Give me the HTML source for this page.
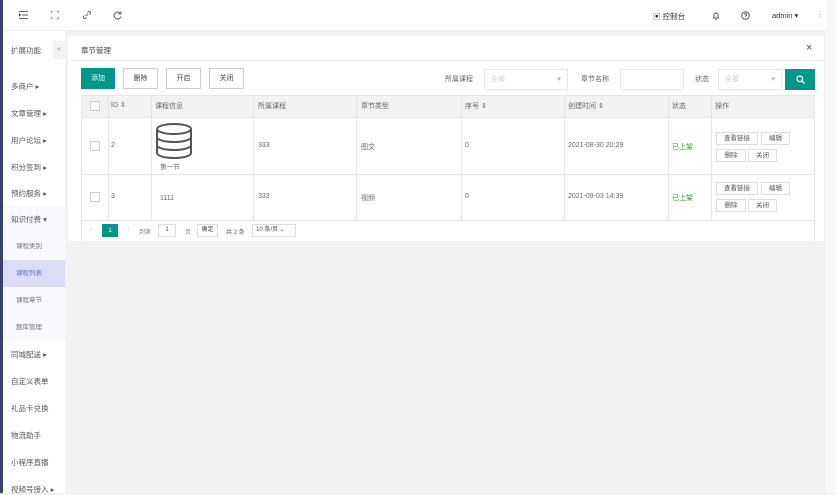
<!DOCTYPE html>
<html><head><meta charset="utf-8"><style>
*{box-sizing:border-box;margin:0;padding:0}
body{width:836px;height:493px;overflow:hidden;background:#f2f2f2;font-family:"Liberation Sans","Noto Sans CJK SC",sans-serif;font-size:8px;color:#444;position:relative}
.a{position:absolute}
.strip{left:0;top:0;width:3px;height:493px;background:#3b3e72}
.hdr{left:3px;top:0;width:823px;height:31px;background:#fff;border-bottom:1px solid #eee}
.sb{left:3px;top:31px;width:62px;height:462px;background:#fff}
.mi{position:absolute;left:8px;font-size:7.5px;color:#555}
.sub{position:absolute;left:0;width:62px;height:27px;background:#f8f8fd;font-size:6.5px;color:#777;padding-left:13px;line-height:27px}
.card{left:68px;top:36px;width:756px;height:205px;background:#fff}
.btn{position:absolute;top:68px;height:21px;border:1px solid #ccc;background:#fff;font-size:7px;text-align:center;line-height:19px;color:#444}
.th,.td{position:absolute;font-size:7px;color:#666}
.vl{position:absolute;width:1px;background:#e6e6e6}
.hl{position:absolute;height:1px;background:#e6e6e6;left:81px;width:734px}
.cb{position:absolute;left:90px;width:10px;height:10px;border:1px solid #ccc;background:#fff}
.ob{position:absolute;height:13px;border:1px solid #ddd;font-size:6.5px;line-height:11px;text-align:center;background:#fff;color:#555}
.sel{position:absolute;top:69px;height:21px;border:1px solid #e6e6e6;font-size:7px;color:#ccc;padding-left:6px;line-height:19px}
.scr{left:826px;top:0;width:10px;height:493px;background:#f7f7f7}
</style></head><body>
<div class="a strip"></div>
<div class="a hdr">
<svg class="a" style="left:16px;top:11px" width="9" height="8" stroke="#666" stroke-width="1"><path d="M0 .5h9M3 4h6M0 7.5h9M0 2.5l1.5 1.5L0 5.5"/></svg>
<svg class="a" style="left:48px;top:11px" width="8" height="8" stroke="#666" stroke-width="1" fill="none"><path d="M0 2.5V0h2.5M5.5 0H8v2.5M8 5.5V8H5.5M2.5 8H0V5.5"/></svg>
<svg class="a" style="left:80px;top:11px" width="8" height="8" stroke="#666" stroke-width="1" fill="none"><path d="M3 5l2-2M1.5 4.5l-1 1a1.5 1.5 0 002 2l1-1M4.5 1.5l1-1a1.5 1.5 0 012 2l-1 1"/></svg>
<svg class="a" style="left:110px;top:11px" width="9" height="9" stroke="#666" stroke-width="1.1" fill="none"><path d="M7.5 2.5A3.5 3.5 0 1 0 8 5.5M7.8 0.5v2.3H5.5"/></svg>
<span class="a" style="left:650px;top:11px;font-size:7.5px;color:#333">▣ 控制台</span>
<svg class="a" style="left:709px;top:11px" width="8" height="9" stroke="#555" stroke-width="1" fill="none"><path d="M1 7h6M2 7V4a2 2 0 014 0v3M3.3 8.5h1.4"/></svg>
<svg class="a" style="left:738px;top:11px" width="9" height="9" stroke="#555" stroke-width="1" fill="none"><circle cx="4.5" cy="4.5" r="3.8"/><path d="M3.3 3.5a1.2 1.2 0 112 1c-.6.3-.8.6-.8 1.2M4.5 6.8v.3"/></svg>
<span class="a" style="left:769px;top:11px;font-size:7.5px;color:#333">admin ▾</span>
<span class="a" style="left:813px;top:10px;font-size:8px;color:#999">⋮</span>
</div>
<div class="a sb">
<div class="mi" style="left:8px;top:14px">扩展功能</div>
<div class="a" style="left:50px;top:10px;width:12px;height:18px;background:#f2f2f2;color:#999;font-size:7px;text-align:center;line-height:18px">«</div>
<div class="mi" style="top:50px">多商户 ▸</div>
<div class="mi" style="top:77px">文章管理 ▸</div>
<div class="mi" style="top:104px">用户论坛 ▸</div>
<div class="mi" style="top:131px">积分签到 ▸</div>
<div class="mi" style="top:157px">预约服务 ▸</div>
<div class="sub" style="top:175px;background:#f8f8fd;font-size:7.5px;color:#555;padding-left:8px">知识付费 ▾</div>
<div class="sub" style="top:202px">课程类别</div>
<div class="sub" style="top:229px;background:#dcdcf5;color:#6a6ad0">课程列表</div>
<div class="sub" style="top:256px">课程章节</div>
<div class="sub" style="top:283px">题库管理</div>
<div class="mi" style="top:318px">同城配送 ▸</div>
<div class="mi" style="top:345px">自定义表单</div>
<div class="mi" style="top:372px">礼品卡兑换</div>
<div class="mi" style="top:399px">物流助手</div>
<div class="mi" style="top:426px">小程序直播</div>
<div class="mi" style="top:453px">视频号接入 ▸</div>
</div>
<div class="a card"></div>
<div class="a" style="left:81px;top:45px;font-size:7.5px;color:#444">章节管理</div>
<div class="a" style="left:806px;top:42px;font-size:11px;color:#555">×</div>
<div class="a" style="left:68px;top:60px;width:756px;height:1px;background:#eee"></div>
<div class="btn" style="left:81px;width:34px;background:#009688;border-color:#009688;color:#fff">添加</div>
<div class="btn" style="left:123px;width:35px">删除</div>
<div class="btn" style="left:166px;width:35px">开启</div>
<div class="btn" style="left:209px;width:35px">关闭</div>
<div class="a" style="left:445px;top:74px;font-size:7px;color:#666">所属课程</div>
<div class="sel" style="left:484px;width:84px">全部<span style="position:absolute;right:6px;color:#aaa">▾</span></div>
<div class="a" style="left:581px;top:74px;font-size:7px;color:#666">章节名称</div>
<div class="sel" style="left:620px;width:64px"></div>
<div class="a" style="left:695px;top:74px;font-size:7px;color:#666">状态</div>
<div class="sel" style="left:718px;width:64px">全部<span style="position:absolute;right:6px;color:#aaa">▾</span></div>
<div class="a" style="left:785px;top:69px;width:30px;height:21px;background:#009688"></div>
<svg class="a" style="left:796px;top:75px" width="9" height="9" stroke="#fff" stroke-width="1.3" fill="none"><circle cx="3.8" cy="3.8" r="2.8"/><path d="M6 6l2.5 2.5"/></svg>
<div class="a" style="left:81px;top:95px;width:734px;height:146px;border:1px solid #e6e6e6;border-bottom:none"></div>
<div class="a" style="left:82px;top:96px;width:732px;height:21px;background:#f2f2f2"></div>
<div class="hl" style="top:117px"></div><div class="hl" style="top:174px"></div><div class="hl" style="top:220px"></div>
<div class="vl" style="left:108px;top:96px;height:124px"></div>
<div class="vl" style="left:151px;top:96px;height:124px"></div>
<div class="vl" style="left:253px;top:96px;height:124px"></div>
<div class="vl" style="left:356px;top:96px;height:124px"></div>
<div class="vl" style="left:461px;top:96px;height:124px"></div>
<div class="vl" style="left:564px;top:96px;height:124px"></div>
<div class="vl" style="left:668px;top:96px;height:124px"></div>
<div class="vl" style="left:711px;top:96px;height:124px"></div>
<div class="cb" style="top:101px"></div><div class="cb" style="top:141px"></div><div class="cb" style="top:192px"></div>
<div class="th" style="left:111px;top:101px">ID ⇕</div>
<div class="th" style="left:155px;top:101px">课程信息</div>
<div class="th" style="left:258px;top:101px">所属课程</div>
<div class="th" style="left:361px;top:101px">章节类型</div>
<div class="th" style="left:465px;top:101px">序号 ⇕</div>
<div class="th" style="left:568px;top:101px">创建时间 ⇕</div>
<div class="th" style="left:672px;top:101px">状态</div>
<div class="th" style="left:715px;top:101px">操作</div>
<svg class="a" style="left:155px;top:123px" width="38" height="36" viewBox="0 0 38 36" fill="none" stroke="#555" stroke-width="2"><ellipse cx="19" cy="6" rx="17" ry="5"/><path d="M2 6v24c0 3 8 5 17 5s17-2 17-5V6M2 14c0 3 8 5 17 5s17-2 17-5M2 22c0 3 8 5 17 5s17-2 17-5"/></svg>
<div class="td" style="left:160px;top:161px;font-size:6.5px">第一节</div>
<div class="td" style="left:111px;top:142px">2</div>
<div class="td" style="left:258px;top:142px">333</div>
<div class="td" style="left:361px;top:142px">图文</div>
<div class="td" style="left:465px;top:142px">0</div>
<div class="td" style="left:568px;top:142px">2021-08-30 20:29</div>
<div class="td" style="left:672px;top:142px;color:#2a9a2a">已上架</div>
<div class="ob" style="left:716px;top:132px;width:42px">查看链接</div><div class="ob" style="left:761px;top:132px;width:29px">编辑</div>
<div class="ob" style="left:716px;top:149px;width:30px">删除</div><div class="ob" style="left:748px;top:149px;width:29px">关闭</div>
<div class="td" style="left:111px;top:193px">3</div>
<div class="td" style="left:160px;top:195px">1111</div>
<div class="td" style="left:258px;top:193px">333</div>
<div class="td" style="left:361px;top:193px">视频</div>
<div class="td" style="left:465px;top:193px">0</div>
<div class="td" style="left:568px;top:193px">2021-09-03 14:39</div>
<div class="td" style="left:672px;top:193px;color:#2a9a2a">已上架</div>
<div class="ob" style="left:716px;top:182px;width:42px">查看链接</div><div class="ob" style="left:761px;top:182px;width:29px">编辑</div>
<div class="ob" style="left:716px;top:199px;width:30px">删除</div><div class="ob" style="left:748px;top:199px;width:29px">关闭</div>
<div class="a" style="left:90px;top:226px;color:#ccc;font-size:7px">‹</div>
<div class="a" style="left:102px;top:224px;width:16px;height:13px;background:#009688;color:#fff;font-size:6.5px;text-align:center;line-height:13px">1</div>
<div class="a" style="left:127px;top:226px;color:#ccc;font-size:7px">›</div>
<div class="a" style="left:139px;top:227px;color:#888;font-size:6px">到第</div>
<div class="a" style="left:158px;top:224px;width:18px;height:13px;border:1px solid #ddd;font-size:6px;text-align:center;line-height:11px">1</div>
<div class="a" style="left:185px;top:227px;color:#888;font-size:6px">页</div>
<div class="a" style="left:197px;top:224px;width:21px;height:13px;border:1px solid #ddd;font-size:6px;text-align:center;line-height:11px">确定</div>
<div class="a" style="left:226px;top:227px;color:#555;font-size:6px">共 2 条</div>
<div class="a" style="left:252px;top:224px;width:44px;height:13px;border:1px solid #ddd;font-size:6px;padding-left:3px;line-height:11px">10 条/页 ⌄</div>
<div class="a scr"></div>
</body></html>
